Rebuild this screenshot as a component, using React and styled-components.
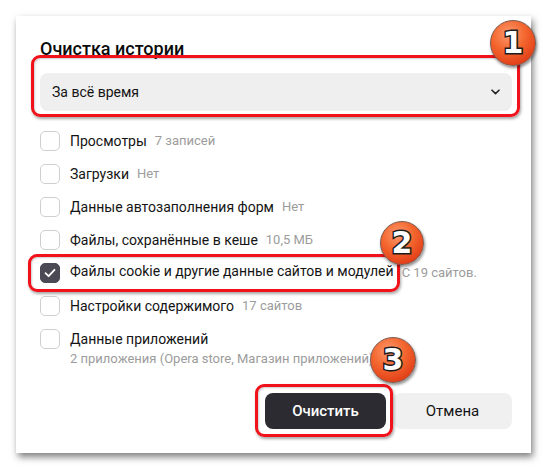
import React from "react";
import styled, { createGlobalStyle } from "styled-components";

const Global = createGlobalStyle`
  html, body { margin: 0; padding: 0; background: #fff; }
  body { font-family: Roboto, "Noto Sans", "Liberation Sans", sans-serif; color: #141414; }
  * { box-sizing: border-box; }
`;

const Stage = styled.div`
  position: relative;
  width: 549px;
  height: 469px;
  padding: 16px 0 0 16px;
`;

const Panel = styled.div`
  width: 515px;
  height: 437px;
  background: #fff;
  box-shadow: 2px 4px 7px rgba(0, 0, 0, 0.5);
  padding: 21px 19px 0 24px;
  display: flex;
  flex-direction: column;
`;

const Title = styled.h2`
  margin: 0;
  font-size: 18px;
  line-height: 24px;
  font-weight: 500;
  color: #0a0a0a;
`;

const Marked = styled.div`
  position: relative;
  display: ${(p) => (p.$inline ? "inline-flex" : "flex")};
`;

const Highlight = styled.span`
  position: absolute;
  top: ${(p) => p.$t}px;
  bottom: ${(p) => p.$b}px;
  left: ${(p) => p.$l}px;
  right: ${(p) => p.$r}px;
  border: 3px solid #f0111a;
  border-radius: 9px;
  box-shadow: 1px 2px 3px rgba(0, 0, 0, 0.35), inset 1px 1px 2px rgba(0, 0, 0, 0.2);
  pointer-events: none;
`;

const Select = styled.div`
  margin-top: 12px;
  height: 38px;
  width: 100%;
  background: #efefef;
  border-radius: 8px;
  display: flex;
  align-items: center;
  justify-content: space-between;
  padding: 0 12px 0 12px;
  font-size: 14px;
  color: #141414;
`;

const List = styled.div`
  margin-top: 13px;
  display: flex;
  flex-direction: column;
`;

const Row = styled.div`
  display: flex;
  flex-direction: column;
  justify-content: center;
  min-height: 33px;
`;

const Line = styled.div`
  display: flex;
  align-items: center;
  height: 33px;
`;

const Box = styled.span`
  width: 20px;
  height: 20px;
  border-radius: 5px;
  border: 1px solid ${(p) => (p.$checked ? "#4a4954" : "#cfcfcf")};
  background: ${(p) => (p.$checked ? "#4a4954" : "#fff")};
  display: inline-flex;
  align-items: center;
  justify-content: center;
  flex: none;
`;

const Label = styled.span`
  margin-left: 10px;
  font-size: 14px;
  color: #141414;
  white-space: nowrap;
`;

const Hint = styled.span`
  margin-left: 8px;
  font-size: 13px;
  color: #9c9c9c;
  white-space: nowrap;
`;

const Sub = styled.div`
  margin-left: 30px;
  margin-top: -5px;
  font-size: 13px;
  color: #9c9c9c;
  line-height: 18px;
`;

const Actions = styled.div`
  margin-top: 25px;
  display: flex;
  justify-content: flex-end;
  gap: 7px;
`;

const Button = styled.button`
  height: 36px;
  width: ${(p) => p.$w}px;
  border: none;
  border-radius: 8px;
  font-family: inherit;
  font-size: 15px;
  font-weight: ${(p) => (p.$primary ? 500 : 400)};
  background: ${(p) => (p.$primary ? "#2c2b31" : "#f0f0f0")};
  color: ${(p) => (p.$primary ? "#fff" : "#141414")};
`;

const Badge = styled.div`
  position: absolute;
  left: ${(p) => p.$x}px;
  top: ${(p) => p.$y}px;
  width: ${(p) => p.$s}px;
  height: ${(p) => p.$s}px;
  border-radius: 50%;
  background: radial-gradient(circle at 40% 30%, #fb9a70 0%, #f4672f 40%, #e3421a 75%, #c9330f 100%);
  border: 1px solid #7a5a50;
  box-shadow: 1px 2px 3px rgba(0, 0, 0, 0.45);
  display: flex;
  align-items: center;
  justify-content: center;
  font-family: "DejaVu Sans", "Liberation Sans", sans-serif;
  font-weight: 700;
  font-size: 30px;
  color: #fff;
  -webkit-text-stroke: 3px #1c1c1c;
  paint-order: stroke fill;
  line-height: 1;
`;

const Check = () => (
  <svg width="12" height="10" viewBox="0 0 12 10">
    <path d="M1.5 5.2 L4.6 8.2 L10.5 1.8" fill="none" stroke="#fff" strokeWidth="1.8" strokeLinecap="round" strokeLinejoin="round" />
  </svg>
);

const Chevron = () => (
  <svg width="9" height="6" viewBox="0 0 9 6">
    <path d="M1 1.2 L4.5 4.6 L8 1.2" fill="none" stroke="#222" strokeWidth="1.6" strokeLinecap="round" strokeLinejoin="round" />
  </svg>
);

const items = [
  { label: "Просмотры", hint: "7 записей" },
  { label: "Загрузки", hint: "Нет" },
  { label: "Данные автозаполнения форм", hint: "Нет" },
  { label: "Файлы, сохранённые в кеше", hint: "10,5 МБ" },
  { label: "Файлы cookie и другие данные сайтов и модулей", hint: "С 19 сайтов.", checked: true, marked: true },
  { label: "Настройки содержимого", hint: "17 сайтов" },
  { label: "Данные приложений", sub: "2 приложения (Opera store, Магазин приложений)" },
];

export default function App() {
  return (
    <>
      <Global />
      <Stage>
        <Panel>
          <Title>Очистка истории</Title>
          <Marked>
            <Select>
              <span>За всё время</span>
              <Chevron />
            </Select>
            <Highlight $t={-6} $b={-6} $l={-9} $r={-8} />
          </Marked>
          <List>
            {items.map((it) => (
              <Row key={it.label}>
                <Line>
                  {it.marked ? (
                    <Marked $inline>
                      <Box $checked={it.checked}>{it.checked && <Check />}</Box>
                      <Label>{it.label}</Label>
                      <Highlight $t={-9} $b={-9} $l={-12} $r={-6} />
                    </Marked>
                  ) : (
                    <>
                      <Box $checked={it.checked}>{it.checked && <Check />}</Box>
                      <Label>{it.label}</Label>
                    </>
                  )}
                  {it.hint && <Hint>{it.hint}</Hint>}
                </Line>
                {it.sub && <Sub>{it.sub}</Sub>}
              </Row>
            ))}
          </List>
          <Actions>
            <Marked $inline>
              <Button $primary $w={121}>Очистить</Button>
              <Highlight $t={-9} $b={-8} $l={-10} $r={-7} />
            </Marked>
            <Button $w={119}>Отмена</Button>
          </Actions>
        </Panel>
        <Badge $x={490} $y={20} $s={46}>1</Badge>
        <Badge $x={380} $y={221} $s={44}>2</Badge>
        <Badge $x={370} $y={337} $s={46}>3</Badge>
      </Stage>
    </>
  );
}
